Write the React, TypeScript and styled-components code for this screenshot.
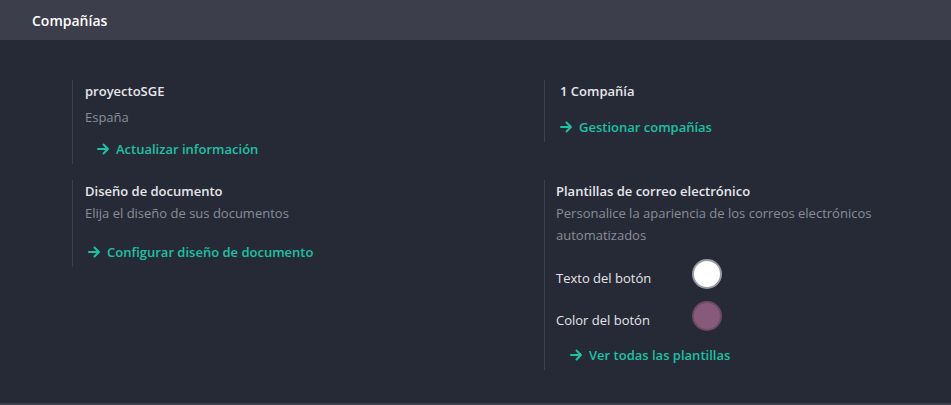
import styled, { createGlobalStyle } from 'styled-components';

const GlobalStyle = createGlobalStyle`
  html, body {
    margin: 0;
    padding: 0;
    background: #262a36;
  }
  body {
    font-family: "Open Sans", "Liberation Sans", sans-serif;
    font-size: 13px;
    color: #e4e4e7;
  }
`;

const Page = styled.div`
  width: 951px;
  height: 405px;
  display: flex;
  flex-direction: column;
  background: #262a36;
  border-bottom: 2px solid #3c3e4b;
  box-sizing: border-box;
`;

const Header = styled.header`
  height: 40px;
  background: #3c3e4b;
  display: flex;
  align-items: center;
  padding-left: 32px;
  flex-shrink: 0;
`;

const HeaderTitle = styled.h2`
  margin: 0;
  font-size: 14px;
  font-weight: 600;
  color: #ffffff;
`;

const Grid = styled.div`
  display: grid;
  grid-template-columns: 472px 1fr;
  row-gap: 16px;
  padding: 40px 0 0 72px;
  align-items: start;
`;

const Box = styled.div`
  border-left: 1px solid #3f424e;
  padding-left: ${(p: { $pad?: number }) => p.$pad ?? 11}px;
  padding-bottom: 4px;
  display: flex;
  flex-direction: column;
`;

const Title = styled.div`
  font-weight: 600;
  color: #e6e6ea;
  line-height: 22px;
`;

const Muted = styled.div<{ $mt?: number }>`
  color: #8b8d96;
  line-height: 22px;
  margin-top: ${(p) => p.$mt ?? 0}px;
`;

const ActionLink = styled.a<{ $indent?: number; $mt?: number }>`
  display: inline-flex;
  align-items: center;
  gap: 6px;
  margin-left: ${(p) => p.$indent ?? 0}px;
  margin-top: ${(p) => p.$mt ?? 0}px;
  color: #1dc1a4;
  font-weight: 600;
  text-decoration: none;
  line-height: 22px;
  cursor: pointer;
`;

const ColorRow = styled.div<{ $mt?: number }>`
  display: grid;
  grid-template-columns: 136px auto;
  align-items: end;
  line-height: 22px;
  margin-top: ${(p) => p.$mt ?? 0}px;
  color: #e4e4e7;
`;

const Swatch = styled.span<{ $color: string; $border: string }>`
  width: 26px;
  height: 26px;
  border-radius: 50%;
  background: ${(p) => p.$color};
  border: 2px solid ${(p) => p.$border};
  display: block;
`;

const Arrow = () => (
  <svg width="13" height="12" viewBox="0 0 13 12" aria-hidden="true">
    <path d="M1 6h10M6.5 1.5 11 6l-4.5 4.5" fill="none" stroke="currentColor" strokeWidth="2" strokeLinecap="round" strokeLinejoin="round" />
  </svg>
);

export default function App() {
  return (
    <>
      <GlobalStyle />
      <Page>
        <Header>
          <HeaderTitle>Compañías</HeaderTitle>
        </Header>
        <Grid>
          <Box $pad={12}>
            <Title>proyectoSGE</Title>
            <Muted $mt={4}>España</Muted>
            <ActionLink $indent={12} $mt={10}>
              <Arrow /> Actualizar información
            </ActionLink>
          </Box>
          <Box $pad={15}>
            <Title>1 Compañía</Title>
            <ActionLink $mt={14}>
              <Arrow /> Gestionar compañías
            </ActionLink>
          </Box>
          <Box $pad={12}>
            <Title>Diseño de documento</Title>
            <Muted>Elija el diseño de sus documentos</Muted>
            <ActionLink $indent={3} $mt={17}>
              <Arrow /> Configurar diseño de documento
            </ActionLink>
          </Box>
          <Box $pad={11}>
            <Title>Plantillas de correo electrónico</Title>
            <Muted>
              Personalice la apariencia de los correos electrónicos
              <br />
              automatizados
            </Muted>
            <ColorRow $mt={13}>
              Texto del botón
              <Swatch $color="#ffffff" $border="#9a9ba1" />
            </ColorRow>
            <ColorRow $mt={12}>
              Color del botón
              <Swatch $color="#875a7b" $border="#6e4a64" />
            </ColorRow>
            <ActionLink $indent={14} $mt={13}>
              <Arrow /> Ver todas las plantillas
            </ActionLink>
          </Box>
        </Grid>
      </Page>
    </>
  );
}
